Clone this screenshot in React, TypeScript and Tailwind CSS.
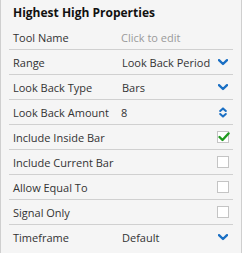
import type { ReactNode } from "react";

type RowProps = {
  label: string;
  children?: ReactNode;
  right?: ReactNode;
  last?: boolean;
};

function Chevron() {
  return (
    <svg width="10" height="7" viewBox="0 0 10 7" className="block">
      <path d="M1 1.2 L5 5 L9 1.2" fill="none" stroke="#1a6fc4" strokeWidth="2.4" strokeLinecap="round" strokeLinejoin="round" />
    </svg>
  );
}

function Spinner() {
  return (
    <svg width="8" height="11" viewBox="0 0 8 11" className="block">
      <path d="M1.2 4 L4 1.4 L6.8 4" fill="none" stroke="#1a6fc4" strokeWidth="2" strokeLinecap="round" strokeLinejoin="round" />
      <path d="M1.2 7 L4 9.6 L6.8 7" fill="none" stroke="#1a6fc4" strokeWidth="2" strokeLinecap="round" strokeLinejoin="round" />
    </svg>
  );
}

function Checkbox({ checked }: { checked?: boolean }) {
  return (
    <div className="relative h-[12px] w-[12px] border border-[#c4c4c4] bg-white">
      {checked ? (
        <svg width="12" height="10" viewBox="0 0 12 10" className="absolute left-[0px] top-[0px]">
          <path d="M1.5 5 L4.5 8 L10.5 1.5" fill="none" stroke="#1f9a1f" strokeWidth="2.4" strokeLinecap="round" strokeLinejoin="round" />
        </svg>
      ) : null}
    </div>
  );
}

function Row({ label, children, right, last }: RowProps) {
  return (
    <div
      className={
        "flex h-[25px] items-center whitespace-nowrap pl-[4px] pr-[4px] " +
        (last ? "" : "border-b border-[#d0d0d0]")
      }
    >
      <div className="w-[109px] shrink-0">{label}</div>
      <div className="min-w-0 flex-1">{children}</div>
      {right ? <div className="flex w-[12px] shrink-0 justify-center">{right}</div> : null}
    </div>
  );
}

export default function App() {
  return (
    <div
      className="h-[253px] w-[242px] border-x border-[#cfcfcf] bg-[#f5f5f5] text-[11px] leading-none text-[#333]"
      style={{ fontFamily: '"Open Sans", sans-serif' }}
    >
      <div className="flex h-[24px] items-center pl-[12px] pt-[1px] text-[12px] font-bold text-[#111]">
        Highest High Properties
      </div>
      <div className="mx-[8px] pt-[1px]">
        <Row label="Tool Name">
          <span className="-ml-[1px] text-[#9a9a9a]">Click to edit</span>
        </Row>
        <Row label="Range" right={<Chevron />}>
          Look Back Period
        </Row>
        <Row label="Look Back Type" right={<Chevron />}>
          Bars
        </Row>
        <Row label="Look Back Amount" right={<Spinner />}>
          <span className="-ml-[1px]">8</span>
        </Row>
        <Row label="Include Inside Bar" right={<Checkbox checked />} />
        <Row label="Include Current Bar" right={<Checkbox />} />
        <Row label="Allow Equal To" right={<Checkbox />} />
        <Row label="Signal Only" right={<Checkbox />} />
        <Row label="Timeframe" right={<Chevron />} last>
          Default
        </Row>
      </div>
    </div>
  );
}
